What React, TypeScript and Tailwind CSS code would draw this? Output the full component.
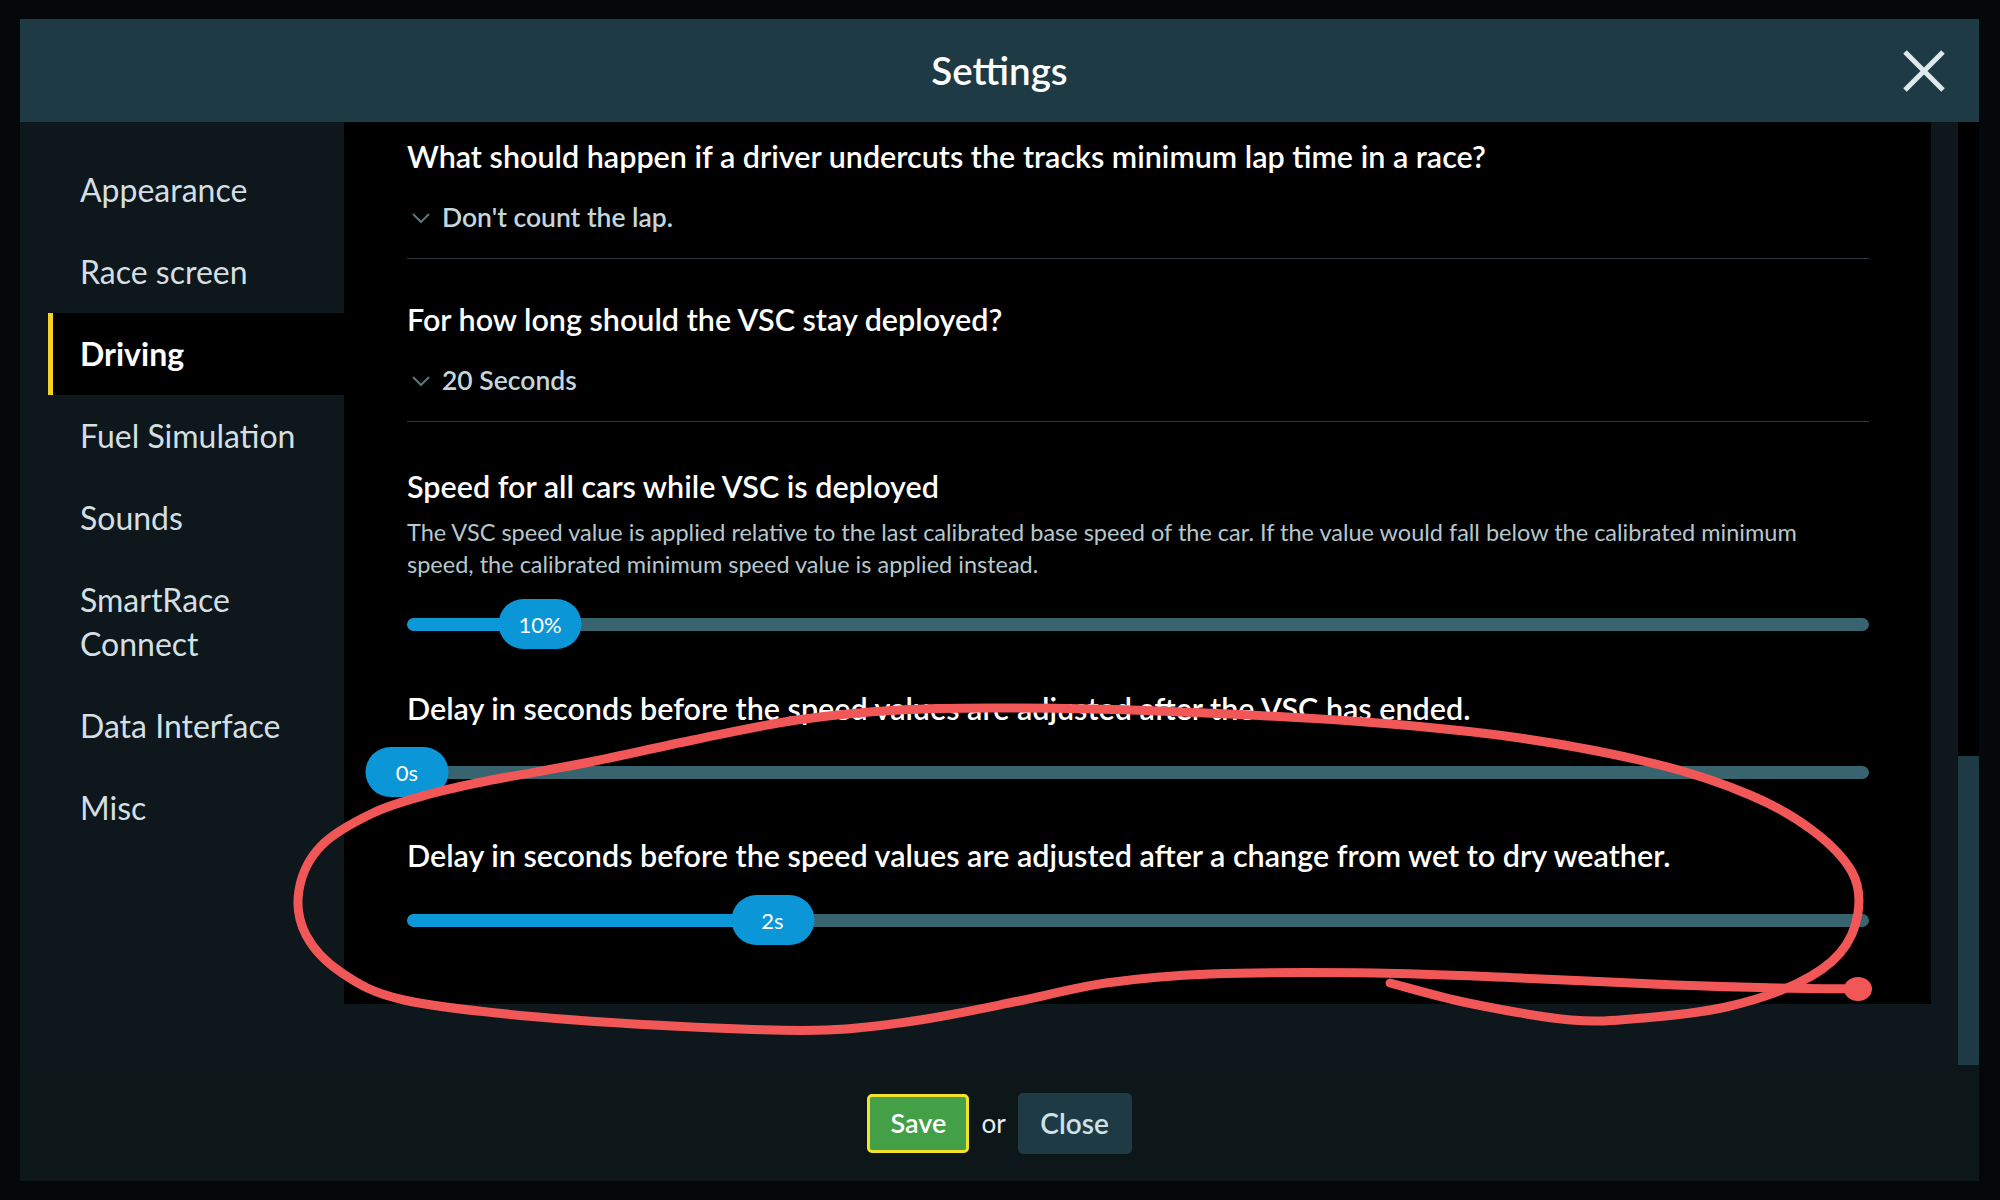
import React from "react";

const menuItems = [
  "Appearance",
  "Race screen",
  "Driving",
  "Fuel Simulation",
  "Sounds",
  "SmartRace Connect",
  "Data Interface",
  "Misc",
];

// hand drawn marker loop on top of the screenshot
const loopPoints: number[][] = [
  [1390, 983], [1468, 1003], [1571, 1020], [1644, 1018], [1726, 1007],
  [1798, 983], [1840, 953], [1858, 913], [1852, 872], [1812, 830],
  [1750, 795], [1656, 764], [1520, 738], [1365, 722], [1158, 711],
  [1003, 708], [900, 710], [797, 720], [693, 740], [590, 762],
  [487, 781], [430, 794], [373, 813], [321, 846], [299, 890],
  [306, 935], [342, 973], [404, 1000], [538, 1017], [714, 1028],
  [827, 1030], [920, 1020], [1024, 1000], [1106, 983], [1210, 974],
  [1375, 973], [1520, 978], [1675, 985], [1778, 988], [1860, 989],
];

const smoothPath = (pts: number[][]) => {
  let d = `M${pts[0][0]},${pts[0][1]}`;
  for (let i = 0; i < pts.length - 1; i++) {
    const p0 = pts[i - 1] || pts[i];
    const p1 = pts[i];
    const p2 = pts[i + 1];
    const p3 = pts[i + 2] || p2;
    const c1x = p1[0] + (p2[0] - p0[0]) / 6;
    const c1y = p1[1] + (p2[1] - p0[1]) / 6;
    const c2x = p2[0] - (p3[0] - p1[0]) / 6;
    const c2y = p2[1] - (p3[1] - p1[1]) / 6;
    d += ` C${c1x},${c1y} ${c2x},${c2y} ${p2[0]},${p2[1]}`;
  }
  return d;
};

const Chevron = () => (
  <svg width="20" height="12" viewBox="0 0 20 12" className="shrink-0">
    <polyline points="2,2 10,10 18,2" fill="none" stroke="#587680" strokeWidth="2" />
  </svg>
);

const Question = ({ children }: { children: React.ReactNode }) => (
  <div className="h-[40px] whitespace-nowrap text-[30.5px] font-semibold leading-[40px] text-white">{children}</div>
);

const Dropdown = ({ value }: { value: string }) => (
  <div className="mt-[24px] flex h-[36px] items-center gap-[11px] pl-[4px]">
    <Chevron />
    <span className="text-[26.5px] font-semibold text-[#c4d6dc]">{value}</span>
  </div>
);

const Slider = ({ value, label }: { value: number; label: string }) => (
  <div className="relative flex h-[50px] items-center">
    <div className="h-[13px] w-full overflow-hidden rounded-full bg-[#37646f]">
      <div className="h-full rounded-full bg-[#0b98d9]" style={{ width: `${value}%` }} />
    </div>
    <div
      className="absolute top-0 flex h-[50px] w-[83px] -translate-x-1/2 items-center justify-center rounded-full bg-[#0a96d7] text-[22px] text-white"
      style={{ left: `${value}%` }}
    >
      {label}
    </div>
  </div>
);

export default function App() {
  return (
    <div className="relative h-[1200px] w-[2000px] overflow-hidden bg-[#05080a] pl-[20px] pt-[19px] font-['Lato','Liberation_Sans',sans-serif]">
      <div className="flex h-[1162px] w-[1959px] flex-col">
        {/* Header */}
        <div className="grid h-[103px] shrink-0 grid-cols-[1fr_auto_1fr] items-center bg-[#1e3a44]">
          <div />
          <h1 className="text-[38.5px] font-semibold text-white">Settings</h1>
          <div className="flex justify-end pr-[34px]">
            <svg width="42" height="42" viewBox="0 0 42 42">
              <path d="M2 2 L40 40 M40 2 L2 40" stroke="#dfe9ec" strokeWidth="5" />
            </svg>
          </div>
        </div>

        {/* Body */}
        <div className="flex h-[943px] shrink-0 bg-[#0e181c]">
          <nav className="w-[324px] shrink-0 pt-[27px]">
            {menuItems.map((item) => {
              const active = item === "Driving";
              return (
                <div
                  key={item}
                  className={`ml-[28px] border-l-[5px] py-[19px] pl-[27px] pr-[40px] text-[32px] leading-[44px] ${
                    active
                      ? "border-[#f3d424] bg-black font-bold text-white"
                      : "border-transparent text-[#d3dfe3]"
                  }`}
                >
                  {item}
                </div>
              );
            })}
          </nav>

          <div className="h-[882px] w-[1587px] shrink-0 overflow-hidden bg-black pl-[63px] pr-[62px] pt-[14px]">
            <Question>What should happen if a driver undercuts the tracks minimum lap time in a race?</Question>
            <Dropdown value="Don't count the lap." />
            <div className="mt-[22px] h-px bg-[#2b3a40]" />

            <div className="mt-[40px]">
              <Question>For how long should the VSC stay deployed?</Question>
            </div>
            <Dropdown value="20 Seconds" />
            <div className="mt-[22px] h-px bg-[#2b3a40]" />

            <div className="mt-[44px]">
              <Question>Speed for all cars while VSC is deployed</Question>
            </div>
            <p className="mt-[10px] whitespace-nowrap text-[23.5px] leading-[32px] text-[#b6c7cd]">
              The VSC speed value is applied relative to the last calibrated base speed of the car. If the value would
              fall below the calibrated minimum
              <br />
              speed, the calibrated minimum speed value is applied instead.
            </p>
            <div className="mt-[19px]">
              <Slider value={9.1} label="10%" />
            </div>

            <div className="mt-[39px]">
              <Question>Delay in seconds before the speed values are adjusted after the VSC has ended.</Question>
            </div>
            <div className="mt-[19px]">
              <Slider value={0} label="0s" />
            </div>

            <div className="mt-[38px]">
              <Question>
                Delay in seconds before the speed values are adjusted after a change from wet to dry weather.
              </Question>
            </div>
            <div className="mt-[20px]">
              <Slider value={25} label="2s" />
            </div>
          </div>

          <div className="w-[27px] shrink-0" />
          <div className="flex w-[21px] shrink-0 flex-col justify-end bg-black">
            <div className="h-[309px] bg-[#1e3a44]" />
          </div>
        </div>

        {/* Footer */}
        <div className="flex flex-1 items-center justify-center gap-[12px] bg-[#0d1619]">
          <button className="h-[59px] w-[102px] rounded-[5px] border-[3px] border-[#f2e22c] bg-[#43a047] text-[27px] font-semibold text-white">
            Save
          </button>
          <span className="text-[26px] text-[#e6eef0]">or</span>
          <button className="h-[61px] w-[114px] rounded-[5px] bg-[#1e3a44] text-[28px] font-semibold text-[#cfe1e7]">
            Close
          </button>
        </div>
      </div>

      <svg
        className="pointer-events-none absolute left-0 top-0"
        width="2000"
        height="1200"
        viewBox="0 0 2000 1200"
      >
        <path
          d={smoothPath(loopPoints)}
          fill="none"
          stroke="#f25757"
          strokeWidth="9"
          strokeLinecap="round"
          strokeLinejoin="round"
        />
        <ellipse cx="1858" cy="989" rx="14" ry="12" fill="#f25757" />
      </svg>
    </div>
  );
}
